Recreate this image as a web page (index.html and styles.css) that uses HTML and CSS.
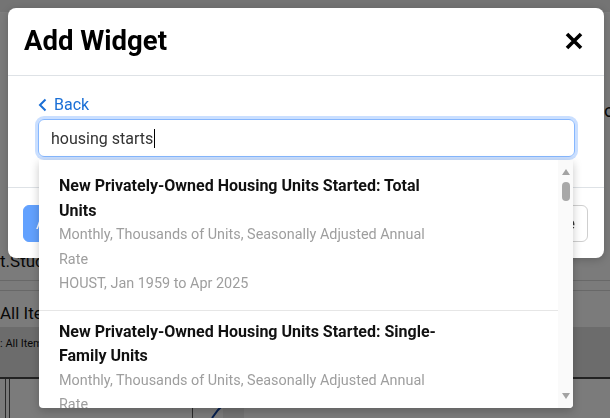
FILE: index.html
```html
<!DOCTYPE html>
<html lang="en">
<head>
<meta charset="utf-8">
<title>Add Widget</title>
<link rel="stylesheet" href="styles.css">
</head>
<body>
<div class="page">
  <div class="topbar"></div>
  <div class="toprow"><span class="peek">o</span></div>
  <div class="crumb">t.Studio</div>
  <div class="rule"></div>
  <div class="rule rule2"></div>
  <div class="series">All Items</div>
  <div class="band">: All Items</div>
  <svg class="chart" width="610" height="41" viewBox="0 0 610 41">
    <rect x="0" y="0" width="610" height="2" fill="#444"/>
    <line x1="5.5" y1="2" x2="5.5" y2="41" stroke="#555"/>
    <line x1="9.5" y1="2" x2="9.5" y2="41" stroke="#555"/>
    <line x1="192.5" y1="2" x2="192.5" y2="41" stroke="#555"/>
    <rect x="223" y="13" width="21" height="28" fill="#e6e6e6"/>
    <polyline points="212,41 218,33 222,29" fill="none" stroke="#0b3f9e" stroke-width="2"/>
  </svg>
</div>

<div class="backdrop"></div>

<div class="modal" role="dialog" aria-labelledby="modal-title">
  <div class="modal-header">
    <h2 class="modal-title" id="modal-title">Add Widget</h2>
    <button class="close" aria-label="Close">
      <svg width="18" height="18" viewBox="0 0 18 18"><path d="M2 2 L16 16 M16 2 L2 16" stroke="#000" stroke-width="3.6" fill="none"/></svg>
    </button>
  </div>
  <div class="modal-body">
    <a class="back" href="#">
      <svg width="9" height="14" viewBox="0 0 9 14"><path d="M7.5 1.5 L2 7 L7.5 12.5" stroke="currentColor" stroke-width="2" fill="none"/></svg>
      <span>Back</span>
    </a>
    <div class="search">
      <div class="search-box"><span class="search-text">housing starts</span><span class="caret"></span></div>
      <div class="dropdown">
        <ul class="results">
          <li class="result">
            <div class="result-title">New Privately-Owned Housing Units Started: Total Units</div>
            <div class="result-meta">Monthly, Thousands of Units, Seasonally Adjusted Annual Rate</div>
            <div class="result-meta">HOUST, Jan 1959 to Apr 2025</div>
          </li>
          <li class="result">
            <div class="result-title">New Privately-Owned Housing Units Started: Single-Family Units</div>
            <div class="result-meta">Monthly, Thousands of Units, Seasonally Adjusted Annual Rate</div>
            <div class="result-meta">HOUST1F, Jan 1959 to Apr 2025</div>
          </li>
          <li class="result">
            <div class="result-title">New Privately-Owned Housing Units Started: Units in Buildings with 5 Units or More</div>
            <div class="result-meta">Monthly, Thousands of Units, Seasonally Adjusted Annual Rate</div>
            <div class="result-meta">HOUST5F, Jan 1959 to Apr 2025</div>
          </li>
        </ul>
        <div class="scrollbar" aria-hidden="true">
          <span class="sb-up"></span>
          <span class="sb-thumb"></span>
          <span class="sb-fill"></span>
          <span class="sb-down"></span>
        </div>
      </div>
    </div>
  </div>
  <div class="modal-footer">
    <button class="btn btn-primary">Add Widget</button>
    <button class="btn btn-secondary">Close</button>
  </div>
</div>
</body>
</html>
```
FILE: styles.css
```css
* { box-sizing: border-box; }

html, body {
  margin: 0;
  padding: 0;
  width: 610px;
  height: 418px;
  overflow: hidden;
}

body {
  font-family: Roboto, "Liberation Sans", Arial, sans-serif;
  background: #f6f6f6;
  color: #222;
}

/* background page (seen through the backdrop) */
.page {
  width: 610px;
  height: 418px;
  display: flex;
  flex-direction: column;
}
.topbar {
  height: 13px;
  flex: none;
  border-bottom: 1px solid #fafafa;
  background: #e9e9e9;
}
.toprow {
  margin-top: 86px;
  height: 24px;
  display: flex;
  justify-content: flex-end;
  flex: none;
}
.peek {
  width: 6px;
  overflow: hidden;
  font-size: 18px;
  line-height: 24px;
  color: #111;
}
.crumb {
  margin-top: 128px;
  flex: none;
  font-size: 17px;
  line-height: 20px;
  color: #111;
}
.rule {
  flex: none;
  margin-top: 9px;
  height: 1px;
  background: #d0d0d0;
}
.rule2 { margin-top: 9px; }
.series {
  flex: none;
  margin-top: 12px;
  font-size: 17px;
  line-height: 20px;
  color: #111;
}
.band {
  flex: none;
  margin-top: 4px;
  height: 50px;
  background: #d8d8d8;
  padding-top: 10px;
  font-size: 11px;
  line-height: 14px;
  color: #111;
}
.chart { display: block; flex: none; }

.backdrop {
  position: fixed;
  inset: 0;
  background: rgba(0, 0, 0, 0.5);
}

/* modal */
.modal {
  position: absolute;
  top: 8px;
  left: 8px;
  width: 596px;
  background: #fff;
  border-radius: 8px;
  box-shadow: 0 2px 8px rgba(0, 0, 0, 0.2);
}
.modal-header {
  display: flex;
  align-items: center;
  justify-content: space-between;
  padding: 16px 21px 17px 16px;
  border-bottom: 1px solid #dee2e6;
}
.modal-title {
  margin: 0;
  font-size: 27.5px;
  line-height: 34px;
  font-weight: 700;
  color: #000;
}
.close {
  border: 0;
  background: none;
  padding: 0;
  width: 18px;
  height: 18px;
  display: flex;
}

.modal-body {
  padding: 17px 29px 30px 30px;
}
.back {
  display: inline-flex;
  align-items: center;
  gap: 7px;
  color: #1a6fd6;
  text-decoration: none;
  font-size: 16px;
  line-height: 24px;
  vertical-align: top;
}
.back span { display: block; }

.search {
  position: relative;
  margin-top: 2px;
}
.search-box {
  height: 38px;
  border: 1px solid #86b7fe;
  border-radius: 6px;
  box-shadow: 0 0 0 3px rgba(13, 110, 253, 0.22);
  padding: 0 12px;
  display: flex;
  align-items: center;
  font-size: 16px;
  color: #333;
}
.caret {
  width: 1px;
  height: 19px;
  background: #000;
  margin-left: 1px;
}

.dropdown {
  position: absolute;
  top: 41px;
  left: 1px;
  right: 2px;
  height: 248px;
  display: flex;
  background: #fff;
  border-radius: 0 0 4px 4px;
  box-shadow: 0 3px 10px rgba(0, 0, 0, 0.22);
  overflow: hidden;
  z-index: 2;
}
.results {
  list-style: none;
  margin: 0;
  padding: 5px 0 0;
  flex: 1;
  overflow: hidden;
}
.result {
  padding: 9px 20px 13px;
  border-bottom: 1px solid #e6e6e6;
}
.result-title,
.result-meta {
  max-width: 385px;
}
.result-title {
  font-size: 16px;
  line-height: 24.5px;
  font-weight: 700;
  color: #111;
}
.result-meta {
  font-size: 14.4px;
  line-height: 24.5px;
  color: #9e9e9e;
}

.scrollbar {
  width: 15px;
  flex: none;
  display: flex;
  flex-direction: column;
  align-items: center;
  background: #fafafa;
}
.sb-up {
  margin-top: 9px;
  width: 0;
  height: 0;
  border-left: 4.5px solid transparent;
  border-right: 4.5px solid transparent;
  border-bottom: 6px solid #a3a3a3;
}
.sb-thumb {
  margin-top: 7px;
  width: 8px;
  height: 19px;
  border-radius: 4px;
  background: #a8a8a8;
}
.sb-fill { flex: 1; }
.sb-down {
  margin-bottom: 9px;
  width: 0;
  height: 0;
  border-left: 4.5px solid transparent;
  border-right: 4.5px solid transparent;
  border-top: 6px solid #a3a3a3;
}

.modal-footer {
  display: flex;
  justify-content: space-between;
  padding: 17px 16px 16px 15px;
  border-top: 1px solid #dee2e6;
}
.btn {
  height: 37px;
  padding: 0 12px;
  border-radius: 6px;
  font-family: Roboto, "Liberation Sans", Arial, sans-serif;
  font-size: 16px;
}
.btn-primary {
  background: #62a1fe;
  border: 1px solid #62a1fe;
  color: #fff;
}
.btn-secondary {
  background: #fff;
  border: 1px solid #cfcfcf;
  color: #333;
}
```
